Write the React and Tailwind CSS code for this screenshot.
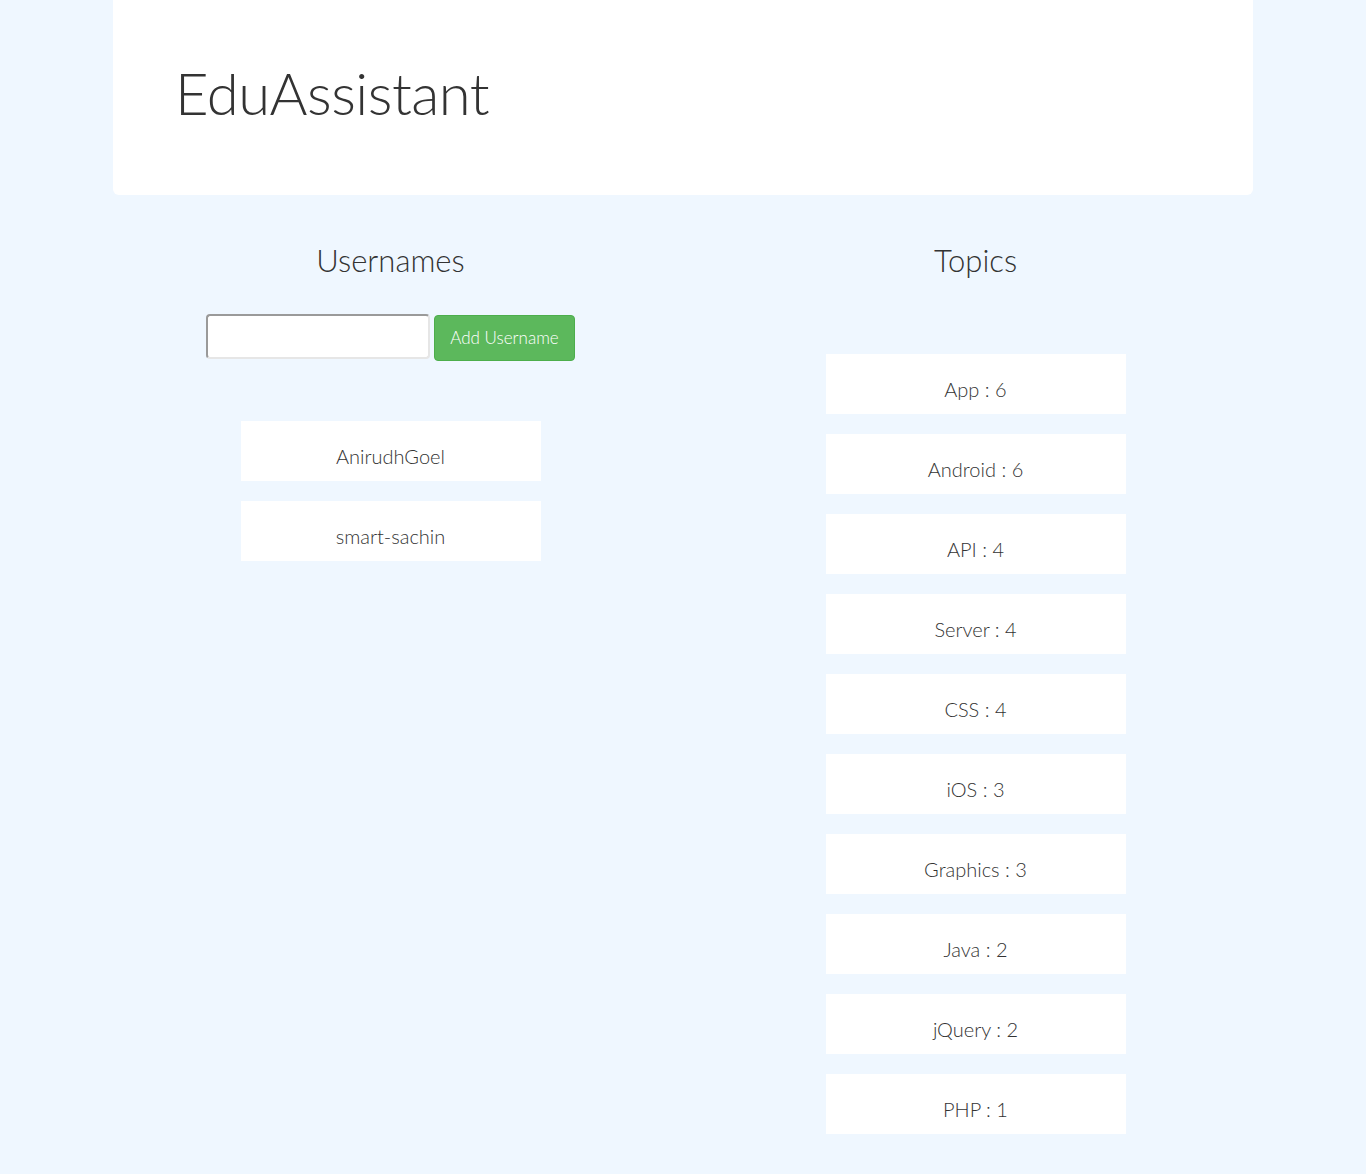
import { useState } from "react";

const users = ["AnirudhGoel", "smart-sachin"];

const topics = [
  ["App", 6],
  ["Android", 6],
  ["API", 4],
  ["Server", 4],
  ["CSS", 4],
  ["iOS", 3],
  ["Graphics", 3],
  ["Java", 2],
  ["jQuery", 2],
  ["PHP", 1],
];

function Card({ children }) {
  return (
    <div className="w-[300px] h-[60px] bg-white flex items-center justify-center pt-[10px] text-[20px] font-light text-[#333]">
      {children}
    </div>
  );
}

export default function App() {
  const [name, setName] = useState("");

  return (
    <div
      className="min-h-[1174px] bg-[#eff7ff] text-[#333]"
      style={{ fontFamily: "Lato, 'Open Sans', sans-serif" }}
    >
      <div className="w-[1170px] mx-auto px-[15px]">
        <div className="bg-white rounded-b-[6px] h-[195px] px-[62px] pt-[64px]">
          <h1 className="text-[58px] font-light leading-none tracking-[-0.5px]">EduAssistant</h1>
        </div>

        <div className="flex -mx-[15px]">
          <div className="w-[585px] px-[15px] flex flex-col items-center">
            <h2 className="mt-[50px] text-[31px] font-light leading-none">Usernames</h2>
            <div className="mt-[38px] flex items-start gap-[4px]">
              <input
                value={name}
                onChange={(e) => setName(e.target.value)}
                className="w-[224px] h-[45px] bg-white rounded-[4px] border-2 border-t-[#9a9a9a] border-l-[#9a9a9a] border-b-[#e6e6e6] border-r-[#e6e6e6] outline-none px-2"
              />
              <button className="h-[46px] mt-px px-[15px] bg-[#5cb85c] border border-[#4cae4c] rounded-[4px] text-white text-[17px] font-light">
                Add Username
              </button>
            </div>
            <div className="mt-[60px] flex flex-col gap-[20px]">
              {users.map((u) => (
                <Card key={u}>{u}</Card>
              ))}
            </div>
          </div>

          <div className="w-[585px] px-[15px] flex flex-col items-center">
            <h2 className="mt-[50px] text-[31px] font-light leading-none">Topics</h2>
            <div className="mt-[78px] flex flex-col gap-[20px] pb-[40px]">
              {topics.map(([t, n]) => (
                <Card key={t}>
                  {t} : {n}
                </Card>
              ))}
            </div>
          </div>
        </div>
      </div>
    </div>
  );
}
